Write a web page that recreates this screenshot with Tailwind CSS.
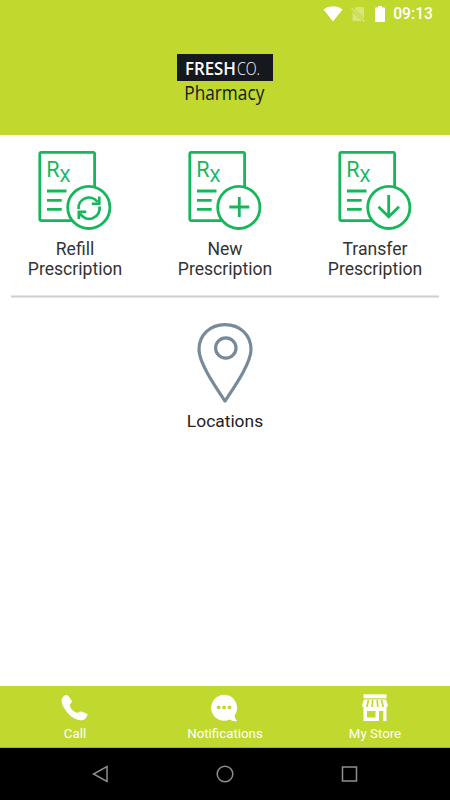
<!DOCTYPE html>
<html lang="en">
<head>
    <meta charset="UTF-8">
    <meta name="viewport" content="width=device-width, initial-scale=1.0">
    <title>FreshCo Pharmacy</title>
    <script src="https://cdn.jsdelivr.net/npm/@tailwindcss/browser@4"></script>
</head>
<body class="bg-white font-['Roboto',sans-serif]">
<div class="flex flex-col w-[450px] h-[800px] overflow-hidden">
    <header class="h-[135px] shrink-0 bg-[#c1d82f]">
        <!-- Status bar -->
        <div class="flex items-center justify-end h-[27px] pr-[17px] text-white">
            <svg class="w-5 h-4" viewBox="0 0 20 16" fill="currentColor"><path d="M.5 3.5C6-.8 14-.8 19.500 3.500L10 15.500Z"/></svg>
            <svg class="w-[14px] h-4 ml-[8px] opacity-35" viewBox="0 0 14 16"><path d="M5 1h7q1 0 1 1v10.500L3.500 3ZM1.500 5.500L11 15H2.500q-1 0-1-1Z" fill="currentColor"/><path d="M.5 2L13.500 15.500" stroke="currentColor" stroke-width="1.300"/></svg>
            <svg class="w-[10px] h-4 ml-[10px]" viewBox="0 0 10 16" fill="currentColor"><path d="M3 0h4v1.500h2q1 0 1 1V15q0 1-1 1H1q-1 0-1-1V2.500q0-1 1-1h2Z"/></svg>
            <span class="ml-2 text-[15.700px] font-medium leading-none">09:13</span>
        </div>
        <div class="flex flex-col items-center mt-[27px]">
            <div class="flex items-center justify-center w-24 h-[27px] bg-[#15191e] text-white">
                <svg class="w-24 h-[27px] font-['Open_Sans',sans-serif]" viewBox="0 0 96 27" fill="currentColor">
                    <text x="8" y="20.500" font-size="17.500" font-weight="600" textLength="51" lengthAdjust="spacingAndGlyphs">FRESH</text>
                    <text x="60" y="20.500" font-size="17.500" font-weight="300" textLength="23" lengthAdjust="spacingAndGlyphs">CO.</text>
                </svg>
            </div>
            <svg class="w-24 h-8 overflow-visible font-['Open_Sans',sans-serif]" viewBox="0 0 96 32" fill="#15191e">
                <text x="7.300" y="19.400" font-size="19.500" textLength="80" lengthAdjust="spacingAndGlyphs">Pharmacy</text>
            </svg>
        </div>
    </header>

    <main class="grow">
        <div class="grid grid-cols-3 pt-[14px] text-center text-[17.600px] leading-[20.500px] text-[#333]">
            <a class="flex flex-col items-center">
                <svg class="w-[76px] h-[82px]" viewBox="0 0 76 82" fill="none" stroke="#16b75b" stroke-width="2.800">
                    <rect x="2.800" y="3.400" width="54.800" height="68.200" rx="1.500"/>
                    <path d="M10 42h19.500M10 51.300h14.700M10 60.400h14.700"/>
                    <g fill="#16b75b" stroke="none"><text x="9.300" y="27.900" font-size="21.500">R</text><text x="22.500" y="33" font-size="17.500">X</text></g>
                    <circle cx="51.800" cy="58.400" r="21.100" fill="white"/>
                    <path d="M41.500 60a10.500 10.500 0 0 1 19-7M62.500 57.500a10.500 10.500 0 0 1-19.500 7"/>
                    <path d="M62.300 47.500v7.200h-7.500M41.800 70v-7.200h7.500" stroke-width="2.600"/>
                </svg>
                <span class="mt-[7.500px]">Refill<br>Prescription</span>
            </a>
            <a class="flex flex-col items-center">
                <svg class="w-[76px] h-[82px]" viewBox="0 0 76 82" fill="none" stroke="#16b75b" stroke-width="2.800">
                    <rect x="2.800" y="3.400" width="54.800" height="68.200" rx="1.500"/>
                    <path d="M10 42h19.500M10 51.300h14.700M10 60.400h14.700"/>
                    <g fill="#16b75b" stroke="none"><text x="9.300" y="27.900" font-size="21.500">R</text><text x="22.500" y="33" font-size="17.500">X</text></g>
                    <circle cx="51.800" cy="58.400" r="21.100" fill="white"/>
                    <path d="M52.300 48v20M42.300 58h20"/>
                </svg>
                <span class="mt-[7.500px]">New<br>Prescription</span>
            </a>
            <a class="flex flex-col items-center">
                <svg class="w-[76px] h-[82px]" viewBox="0 0 76 82" fill="none" stroke="#16b75b" stroke-width="2.800">
                    <rect x="2.800" y="3.400" width="54.800" height="68.200" rx="1.500"/>
                    <path d="M10 42h19.500M10 51.300h14.700M10 60.400h14.700"/>
                    <g fill="#16b75b" stroke="none"><text x="9.300" y="27.900" font-size="21.500">R</text><text x="22.500" y="33" font-size="17.500">X</text></g>
                    <circle cx="51.800" cy="58.400" r="21.100" fill="white"/>
                    <path d="M51.700 46v22M41.500 57.700L51.700 67.800L62 57.700"/>
                </svg>
                <span class="mt-[7.500px]">Transfer<br>Prescription</span>
            </a>
        </div>
        <div class="h-[3px] mx-[11px] mt-[15.500px] bg-[#cfcfcf] border-y border-[#e6e6e6]"></div>
        <a class="flex flex-col items-center mt-[24px] text-[17.400px] text-[#222]">
            <svg class="w-[58px] h-[82px]" viewBox="0 0 58 82" fill="none" stroke="#778a99" stroke-width="3.200">
                <path d="M29 79C19 64 3 41 3 27.500C3 13 14 2.600 29 2.600S55 13 55 27.500C55 41 39 64 29 79Z" stroke-linejoin="round"/>
                <circle cx="29.800" cy="26" r="10.200"/>
            </svg>
            <span class="mt-[7px] leading-[21px]">Locations</span>
        </a>
    </main>

    <nav class="grid grid-cols-3 h-[62px] shrink-0 pt-2 bg-[#c1d82f] border-b border-[#a0b427] text-white text-[13.300px] leading-4 text-center">
        <a class="flex flex-col items-center">
            <svg class="w-7 h-7" viewBox="0 0 28 28" fill="currentColor"><path d="M4.500 1Q6 .5 7.500 2L10.500 6.500Q11.300 8 10 9.200L9 10.500Q8.500 14.500 14 18Q16 19.200 17.500 18.500Q18.800 17 20.200 17.500L25.500 19.500Q27 20.200 26.300 21.700L24 25Q22 26.800 18 26Q10.500 24.500 5 17Q-.5 9 .8 5Q2 2 4.500 1Z"/></svg>
            <span class="mt-1">Call</span>
        </a>
        <a class="flex flex-col items-center">
            <svg class="w-7 h-7" viewBox="0 0 28 28" fill="currentColor"><path d="M13 .8A13 13 0 1 0 18.800 25.500Q22 27.800 26.500 27Q23.800 25.500 23.500 21.500A13 13 0 0 0 13 .8Z"/><g fill="#c1d82f"><circle cx="7.700" cy="13.300" r="1.900"/><circle cx="13.100" cy="13.300" r="1.900"/><circle cx="18.500" cy="13.300" r="1.900"/></g></svg>
            <span class="mt-1">Notifications</span>
        </a>
        <a class="flex flex-col items-center">
            <svg class="w-7 h-7" viewBox="0 0 28 28" fill="currentColor">
                <path d="M2.500 .3h23v4H2.500Z"/>
                <path d="M3 5.500h22L27 11.500q-.5 2-2.600 2t-2.600-1.500q-.5 1.500-2.600 1.500t-2.600-1.500q-.5 1.500-2.700 1.500t-2.700-1.500q-.5 1.500-2.600 1.500t-2.600-1.500q-.5 1.500-2.600 1.500t-2.400-2Z"/>
                <path d="M7.500 6L5.800 13M11.700 6l-.6 7M16.200 6l.6 7M20.500 6l1.700 7" stroke="#c1d82f" stroke-width="1.700"/>
                <path d="M2.500 13h23v14h-3.200V17H18v10H2.500ZM6 17v6.500h8.500V17Z" fill-rule="evenodd"/>
            </svg>
            <span class="mt-1">My Store</span>
        </a>
    </nav>

    <!-- Android navigation -->
    <div class="flex items-center justify-between h-[52px] shrink-0 px-[91px] bg-black">
        <svg class="w-[18px] h-[18px]" viewBox="0 0 18 18" fill="none" stroke="#8e8e8e" stroke-width="1.500"><path d="M16 1.500v15L2.500 9Z"/></svg>
        <svg class="w-[18px] h-[18px]" viewBox="0 0 18 18" fill="none" stroke="#8e8e8e" stroke-width="1.500"><circle cx="9" cy="9" r="7.800"/></svg>
        <svg class="w-[18px] h-[18px]" viewBox="0 0 18 18" fill="none" stroke="#8e8e8e" stroke-width="1.500"><rect x="1.500" y="2" width="14" height="14"/></svg>
    </div>
</div>
</body>
</html>
